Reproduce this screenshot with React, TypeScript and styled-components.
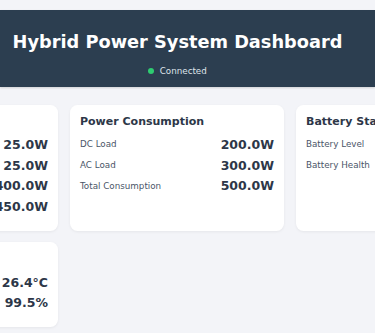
import React from "react";
import styled, { createGlobalStyle } from "styled-components";

type Row = { label: string; value: string };
type Panel = { title: string; rows: Row[] };

const topPanels: Panel[] = [
  {
    title: "Power Generation",
    rows: [
      { label: "Solar Input", value: "25.0W" },
      { label: "Wind Input", value: "25.0W" },
      { label: "Grid Input", value: "400.0W" },
      { label: "Total Generation", value: "450.0W" },
    ],
  },
  {
    title: "Power Consumption",
    rows: [
      { label: "DC Load", value: "200.0W" },
      { label: "AC Load", value: "300.0W" },
      { label: "Total Consumption", value: "500.0W" },
    ],
  },
  {
    title: "Battery Status",
    rows: [
      { label: "Battery Level", value: "85.0%" },
      { label: "Battery Health", value: "98.0%" },
    ],
  },
];

const bottomPanels: Panel[] = [
  {
    title: "System Health",
    rows: [
      { label: "Temperature", value: "26.4°C" },
      { label: "Efficiency", value: "99.5%" },
    ],
  },
];

const GlobalStyle = createGlobalStyle`
  html, body {
    margin: 0;
    padding: 0;
    background: #f3f4f8;
    overflow: hidden;
    font-family: "DejaVu Sans", Verdana, sans-serif;
  }
`;

const Page = styled.div`
  padding-top: 10px;
  min-height: 333px;
  box-sizing: border-box;
`;

const Header = styled.header`
  background: #2c3e50;
  color: #ffffff;
  text-align: center;
  padding: 22px 20px 11px 0;
  box-shadow: 0 1px 2px rgba(0, 0, 0, 0.15);
`;

const Title = styled.h1`
  margin: 0 0 12.5px;
  font-size: 17.75px;
  font-weight: 700;
  line-height: 21px;
  white-space: nowrap;
`;

const Status = styled.div`
  display: flex;
  justify-content: center;
  align-items: center;
  gap: 5.5px;
  font-size: 8.75px;
  line-height: normal;
  color: #dfe4ea;
`;

const Dot = styled.span<{ $online: boolean }>`
  width: 6px;
  height: 6px;
  border-radius: 50%;
  background: ${(p) => (p.$online ? "#2ecc71" : "#e74c3c")};
`;

const Grid = styled.main`
  display: grid;
  grid-template-columns: repeat(3, 214px);
  gap: 11px 12px;
  margin: 18px 0 0 -156px;
`;

const Card = styled.section`
  background: #ffffff;
  border-radius: 7.5px;
  box-shadow: 0 1px 3px rgba(0, 0, 0, 0.06);
  padding: 10.5px 10px 14px;
`;

const CardTitle = styled.h2`
  margin: 0 0 6px;
  font-size: 11px;
  font-weight: 700;
  line-height: normal;
  color: #2d3748;
  white-space: nowrap;
`;

const Item = styled.div`
  display: flex;
  align-items: center;
  justify-content: space-between;
  padding: 2.9px 0;
`;

const Label = styled.span`
  font-size: 8.75px;
  color: #4a5568;
`;

const Value = styled.span`
  font-size: 12.5px;
  font-weight: 700;
  color: #2d3748;
`;

const PanelCard = ({ panel }: { panel: Panel }) => (
  <Card>
    <CardTitle>{panel.title}</CardTitle>
    {panel.rows.map((r) => (
      <Item key={r.label}>
        <Label>{r.label}</Label>
        <Value>{r.value}</Value>
      </Item>
    ))}
  </Card>
);

export default function App() {
  return (
    <Page>
      <GlobalStyle />
      <Header>
        <Title>Hybrid Power System Dashboard</Title>
        <Status>
          <Dot $online />
          Connected
        </Status>
      </Header>
      <Grid>
        {topPanels.map((p) => (
          <PanelCard key={p.title} panel={p} />
        ))}
        {bottomPanels.map((p) => (
          <PanelCard key={p.title} panel={p} />
        ))}
      </Grid>
    </Page>
  );
}
